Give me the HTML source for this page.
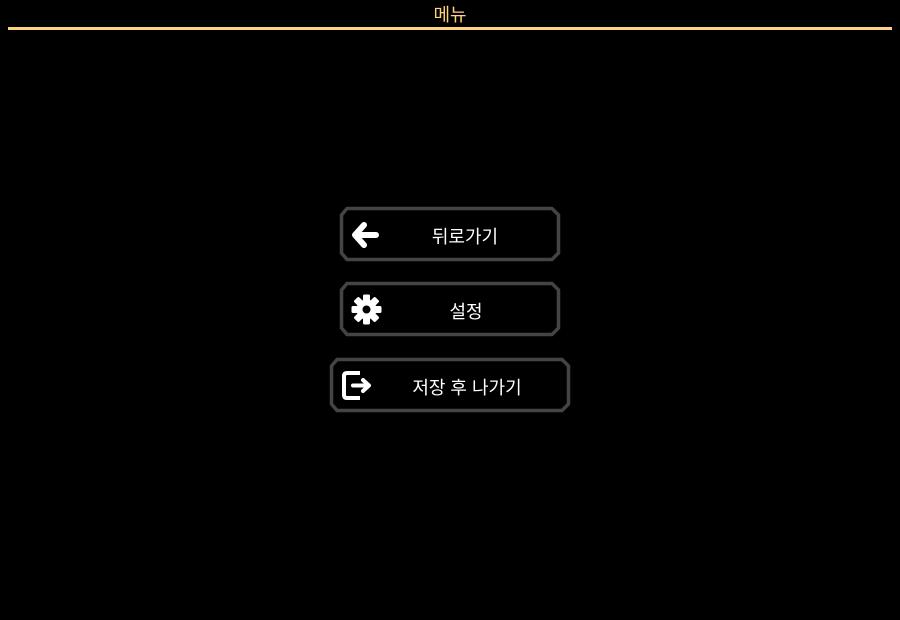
<!DOCTYPE html>
<html><head><meta charset="utf-8"><style>
body{margin:0;width:900px;height:620px;background:#000;overflow:hidden;position:relative;font-family:"Liberation Sans","Noto Sans CJK KR",sans-serif;}
.t{position:absolute;left:0;width:900px;top:1px;text-align:center;color:#ffd27f;font-size:18px;}
.line{position:absolute;left:8px;top:27px;width:884px;height:3px;background:#ffd27f;}
.b{position:absolute;}
.lbl{position:absolute;color:#fff;font-size:18px;white-space:nowrap;transform:translateX(-50%);}
</style></head><body>
<div class="t">메뉴</div>
<div class="line"></div>
<svg class="b" style="left:0;top:0" width="900" height="620">
<g fill="none" stroke="#444" stroke-width="3.5">
<polygon points="347,208.5 552,208.5 558.5,215 558.5,253 552,259.5 347,259.5 341.5,253 341.5,215"/>
<polygon points="347,283.5 552,283.5 558.5,290 558.5,328 552,334.5 347,334.5 341.5,328 341.5,290"/>
<polygon points="337,359.5 562,359.5 568.5,366 568.5,404 562,410.5 337,410.5 331.5,404 331.5,366"/>
</g>
<path d="M364,225 L355,235 L364,245 M356,235 L376,235" stroke="#fff" stroke-width="6" fill="none" stroke-linecap="round" stroke-linejoin="round"/>
<g transform="translate(366.5,309.5)" fill="#fff">
<circle r="10"/>
<g id="t"><rect x="-3.5" y="-15" width="7" height="8" rx="1.5"/></g>
<use href="#t" transform="rotate(45)"/><use href="#t" transform="rotate(90)"/><use href="#t" transform="rotate(135)"/>
<use href="#t" transform="rotate(180)"/><use href="#t" transform="rotate(225)"/><use href="#t" transform="rotate(270)"/><use href="#t" transform="rotate(315)"/>
<circle r="4" fill="#000"/>
</g>
<path d="M360,373 L347,373 Q344,373 344,376 L344,395 Q344,398 347,398 L360,398" stroke="#fff" stroke-width="4" fill="none"/>
<path d="M353,385.5 L368,385.5 M363,380 L369,385.5 L363,391" stroke="#fff" stroke-width="4" fill="none" stroke-linecap="round" stroke-linejoin="round"/>
</svg>
<div class="lbl" style="left:465px;top:223px">뒤로가기</div>
<div class="lbl" style="left:466px;top:298px">설정</div>
<div class="lbl" style="left:467px;top:374px">저장 후 나가기</div>
</body></html>
